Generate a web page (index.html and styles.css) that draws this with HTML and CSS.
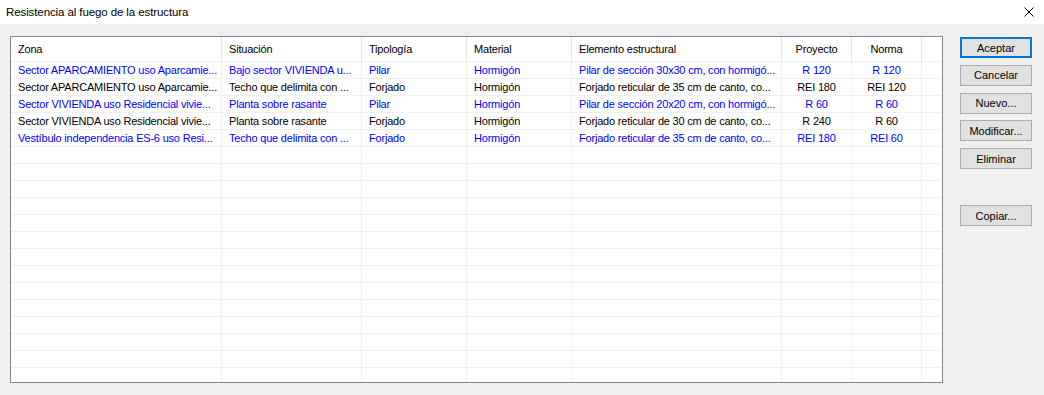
FILE: index.html
```html
<!DOCTYPE html>
<html>

<head>
	<title>Resistencia al fuego de la estructura</title>
	<link rel="stylesheet" href="styles.css">
</head>

<body>
	<div class="titlebar">
		<span class="titulo">Resistencia al fuego de la estructura</span>
		<svg class="cerrar" width="10" height="10" viewBox="0 0 10 10">
			<path d="M0.5 0.5 L9.5 9.5 M9.5 0.5 L0.5 9.5" stroke="#000" stroke-width="1" fill="none" />
		</svg>
	</div>

	<div class="dialogo">
		<div class="lista">
			<div class="fila cabecera">
				<div>Zona</div>
				<div>Situación</div>
				<div>Tipología</div>
				<div>Material</div>
				<div>Elemento estructural</div>
				<div class="centro">Proyecto</div>
				<div class="centro">Norma</div>
				<div></div>
			</div>
			<div id="filas">
				<div class="fila azul">
					<div>Sector APARCAMIENTO uso Aparcamie...</div>
					<div>Bajo sector VIVIENDA u...</div>
					<div>Pilar</div>
					<div>Hormigón</div>
					<div>Pilar de sección 30x30 cm, con hormigó...</div>
					<div class="centro">R 120</div>
					<div class="centro">R 120</div>
					<div></div>
				</div>
				<div class="fila">
					<div>Sector APARCAMIENTO uso Aparcamie...</div>
					<div>Techo que delimita con ...</div>
					<div>Forjado</div>
					<div>Hormigón</div>
					<div>Forjado reticular de 35 cm de canto, co...</div>
					<div class="centro">REI 180</div>
					<div class="centro">REI 120</div>
					<div></div>
				</div>
				<div class="fila azul">
					<div>Sector VIVIENDA uso Residencial vivie...</div>
					<div>Planta sobre rasante</div>
					<div>Pilar</div>
					<div>Hormigón</div>
					<div>Pilar de sección 20x20 cm, con hormigó...</div>
					<div class="centro">R 60</div>
					<div class="centro">R 60</div>
					<div></div>
				</div>
				<div class="fila">
					<div>Sector VIVIENDA uso Residencial vivie...</div>
					<div>Planta sobre rasante</div>
					<div>Forjado</div>
					<div>Hormigón</div>
					<div>Forjado reticular de 30 cm de canto, co...</div>
					<div class="centro">R 240</div>
					<div class="centro">R 60</div>
					<div></div>
				</div>
				<div class="fila azul">
					<div>Vestíbulo independencia ES-6 uso Resi...</div>
					<div>Techo que delimita con ...</div>
					<div>Forjado</div>
					<div>Hormigón</div>
					<div>Forjado reticular de 35 cm de canto, co...</div>
					<div class="centro">REI 180</div>
					<div class="centro">REI 60</div>
					<div></div>
				</div>
			</div>
		</div>

		<div class="botones">
			<button class="defecto">Aceptar</button>
			<button>Cancelar</button>
			<button>Nuevo...</button>
			<button>Modificar...</button>
			<button>Eliminar</button>
			<button class="copiar">Copiar...</button>
		</div>
	</div>

	<script>
		// filas vacías hasta llenar la lista
		var filas = document.getElementById('filas');
		for (var i = 0; i < 15; i++) {
			var fila = document.createElement('div');
			fila.className = 'fila';
			for (var j = 0; j < 8; j++) {
				fila.appendChild(document.createElement('div'));
			}
			filas.appendChild(fila);
		}
	</script>
</body>

</html>
```

FILE: styles.css
```css
body {
	margin: 0;
	background-color: #f0f0f0;
	font-family: "Liberation Sans", Arial, sans-serif;
	font-size: 11px;
	color: #000;
	height: 395px;
	overflow: hidden;
}

.titlebar {
	height: 23px;
	background-color: #fff;
	display: flex;
	align-items: center;
	justify-content: space-between;
	padding: 0 10px 1px 6px;
}

.titulo {
	font-size: 11.5px;
	letter-spacing: -0.1px;
}

.dialogo {
	display: flex;
	align-items: flex-start;
	padding: 12px 0 0 10px;
}

.lista {
	width: 933px;
	height: 347px;
	box-sizing: border-box;
	border: 1px solid #828790;
	background-color: #fff;
	overflow: hidden;
}

.fila {
	display: grid;
	grid-template-columns: 211px 140px 105px 105px 210px 70px 70px 20px;
	height: 17px;
	letter-spacing: -0.2px;
}

.fila > div {
	box-sizing: border-box;
	border-right: 1px solid #f0f0f0;
	border-bottom: 1px solid #f0f0f0;
	padding: 0 0 0 7px;
	white-space: nowrap;
	overflow: hidden;
	line-height: 16px;
}

.fila > div:last-child {
	border-right: none;
}

.fila > .centro {
	text-align: center;
	padding: 0;
}

.cabecera {
	height: 25px;
}

.cabecera > div {
	line-height: 24px;
	border-right-color: #e5e5e5;
}

.azul {
	color: #0000ff;
}

.botones {
	display: flex;
	flex-direction: column;
	gap: 6.75px;
	margin-left: 17px;
	padding-top: 1px;
}

button {
	width: 72px;
	height: 21px;
	padding: 0;
	font-family: "Liberation Sans", Arial, sans-serif;
	font-size: 11px;
	color: #000;
	background-color: #e1e1e1;
	border: 1px solid #adadad;
}

.defecto {
	border: 2px solid #0078d7;
}

.copiar {
	margin-top: 29.25px;
}
```
